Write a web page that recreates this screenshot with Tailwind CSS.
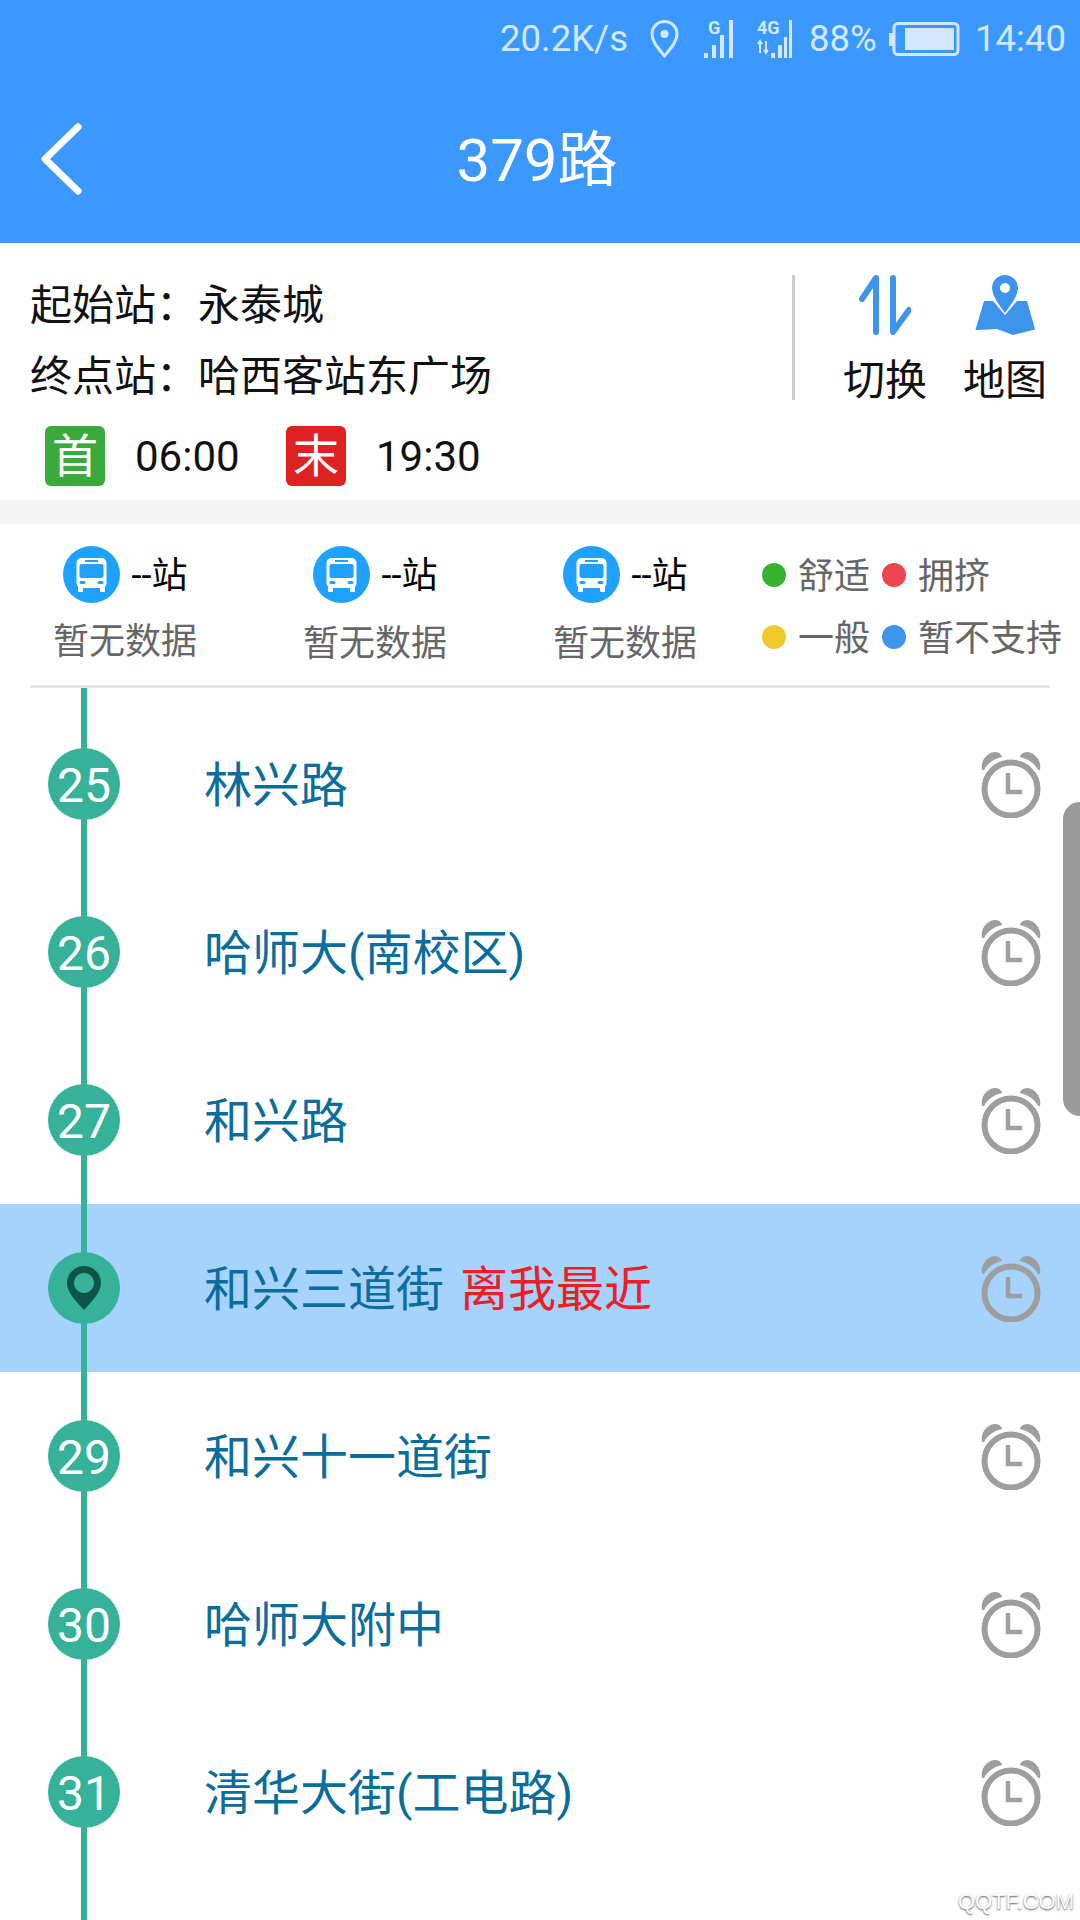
<!DOCTYPE html>
<html lang="en">
<head>
  <meta charset="UTF-8" />
  <meta name="viewport" content="width=device-width, initial-scale=1.0" />
  <title>379路</title>
  <script src="https://cdn.jsdelivr.net/npm/@tailwindcss/browser@4"></script>
</head>
<body class="bg-white">
  <svg class="hidden">
    <symbol id="alarm" viewBox="0 0 60 67">
      <circle cx="30" cy="38" r="26.5" fill="none" stroke="#9e9e9e" stroke-width="6" />
      <path d="M27 22V41H41" fill="none" stroke="#9e9e9e" stroke-width="4.5" />
      <path d="M1 19C-1 8 8 1 14 1C18 1 21 4 21 6C12 8 6 13 3 19Z" fill="#9e9e9e" />
      <path d="M59 19C61 8 52 1 46 1C42 1 39 4 39 6C48 8 54 13 57 19Z" fill="#9e9e9e" />
    </symbol>
    <symbol id="bus" viewBox="0 0 57 57">
      <circle cx="28.5" cy="28.5" r="28.5" fill="#1ea1ff" />
      <rect x="13.5" y="12" width="30" height="30" rx="5" fill="#fff" />
      <rect x="15" y="40" width="5" height="6" rx="1" fill="#fff" />
      <rect x="37" y="40" width="5" height="6" rx="1" fill="#fff" />
      <rect x="22" y="14" width="13" height="2" fill="#1ea1ff" />
      <rect x="16.5" y="18" width="24" height="14" rx="2" fill="#1ea1ff" />
      <rect x="16.5" y="35" width="6" height="3" rx="1.5" fill="#1ea1ff" />
      <rect x="34.5" y="35" width="6" height="3" rx="1.5" fill="#1ea1ff" />
    </symbol>
  </svg>

  <div class="relative w-[1080px] h-[1920px] overflow-hidden bg-white font-['Roboto','Noto_Sans_CJK_SC',sans-serif]">
    <!-- header -->
    <header class="h-[243px] bg-[#3a98fe] text-white">
      <div class="flex items-center h-[78px] pl-[500px] text-[36.5px] text-[#d3e8ff]">
        <span class="w-[128px] whitespace-nowrap">20.2K/s</span>
        <svg class="ml-[22px] w-[29px] h-[38px]" viewBox="0 0 29 38">
          <path d="M14.5 36C9 29 2 22 2 14a12.500 12.500 0 0 1 25 0C27 22 20 29 14.500 36Z" fill="none" stroke="#d3e8ff" stroke-width="3" />
          <circle cx="14.500" cy="14" r="4" fill="#d3e8ff" />
        </svg>
        <svg class="ml-[25px] w-[29px] h-[38px] overflow-visible" viewBox="0 0 29 38">
          <text x="4" y="14" font-size="18" font-weight="700" font-family="Roboto" fill="#d3e8ff">G</text>
          <rect x="0" y="33" width="4" height="5" fill="#d3e8ff" />
          <rect x="8" y="25" width="4" height="13" fill="#d3e8ff" />
          <rect x="16" y="15" width="4" height="23" fill="#d3e8ff" />
          <rect x="25" y="0" width="4" height="38" fill="#d3e8ff" />
        </svg>
        <svg class="ml-[24px] w-[35px] h-[38px] overflow-visible" viewBox="0 0 35 38">
          <text x="0" y="14" font-size="18" font-weight="700" font-family="Roboto" fill="#d3e8ff">4G</text>
          <path d="M3 21V33M1 24L3 21L5 24M9 21V33M7 30L9 33L11 30" fill="none" stroke="#d3e8ff" stroke-width="2" />
          <rect x="14" y="33" width="4" height="5" fill="#d3e8ff" />
          <rect x="21" y="25" width="4" height="13" fill="#d3e8ff" />
          <rect x="27" y="17" width="3" height="21" fill="#d3e8ff" />
          <rect x="32" y="0" width="3" height="38" fill="#d3e8ff" />
        </svg>
        <span class="ml-[17px] w-[64px]">88%</span>
        <svg class="ml-[16px] w-[71px] h-[34px]" viewBox="0 0 71 34">
          <rect x="0" y="11" width="4" height="13" fill="#d3e8ff" />
          <rect x="5" y="1.500" width="64" height="31" rx="4" fill="none" stroke="#d3e8ff" stroke-width="3" />
          <rect x="16" y="6" width="49" height="22" fill="#d3e8ff" />
        </svg>
        <span class="ml-[15px]">14:40</span>
      </div>
      <div class="relative flex items-center justify-center h-[162px] pr-[6px]">
        <svg class="absolute left-[39px] top-[42px] w-[46px] h-[78px]" viewBox="0 0 46 78">
          <path d="M39 7L6 39L39 71" fill="none" stroke="#fff" stroke-width="7" stroke-linecap="round" stroke-linejoin="round" />
        </svg>
        <h1 class="pt-[4px] text-[60px] font-normal">379路</h1>
      </div>
    </header>

    <!-- line info -->
    <section class="flex h-[257px] text-[42px] text-[#111]">
      <div class="w-[792px] pl-[30px] pt-[27px]">
        <div class="h-[71px] leading-[71px]">起始站：永泰城</div>
        <div class="h-[71px] leading-[71px]">终点站：哈西客站东广场</div>
        <div class="flex items-center mt-[11px] pl-[15px]">
          <span class="flex items-center justify-center w-[60px] h-[60px] rounded-[6px] bg-[#3aab3a] text-white text-[46px] leading-none">首</span>
          <span class="w-[151px] ml-[30px] pt-[2px]">06:00</span>
          <span class="flex items-center justify-center w-[60px] h-[60px] rounded-[6px] bg-[#de2222] text-white text-[46px] leading-none">末</span>
          <span class="ml-[30px] pt-[2px]">19:30</span>
        </div>
      </div>
      <div class="w-[3px] h-[125px] mt-[32px] bg-[#cccccc]"></div>
      <div class="ml-[30px] pt-[32px] w-[120px] flex flex-col items-center">
        <svg class="w-[52px] h-[60px]" viewBox="0 0 52 60">
          <path d="M17 57V3L3 24M34 3V57L50 35" fill="none" stroke="#3e94ec" stroke-width="6" stroke-linecap="round" stroke-linejoin="round" />
        </svg>
        <span class="mt-[18px] leading-[56px]">切换</span>
      </div>
      <div class="pt-[32px] w-[120px] flex flex-col items-center">
        <svg class="w-[60px] h-[60px]" viewBox="0 0 60 60">
          <path fill-rule="evenodd" d="M30 0a13 13 0 0 1 13 13C43 21 35 31 30 38C25 31 17 21 17 13A13 13 0 0 1 30 0ZM30 8a5 5 0 1 0 .01 0Z" fill="#3e94ec" />
          <path d="M9 26H18L30 40L42 26H52L60 54Q60 55 58 55L38 60L22 54L2 55Q0 55 1 53Z" fill="#3e94ec" />
        </svg>
        <span class="mt-[18px] leading-[56px]">地图</span>
      </div>
    </section>
    <div class="h-[24px] bg-[#f5f5f5]"></div>

    <!-- crowding -->
    <section class="flex h-[161px] text-[36px]">
      <div class="w-[250px] pt-[22px] flex flex-col items-center">
        <div class="flex items-center gap-[12px] text-black">
          <svg class="w-[57px] h-[57px]"><use href="#bus" /></svg><span class="pt-[2px]">--站</span>
        </div>
        <div class="mt-[8px] leading-[62px] text-[#666666]">暂无数据</div>
      </div>
      <div class="w-[250px] pt-[22px] flex flex-col items-center">
        <div class="flex items-center gap-[12px] text-black">
          <svg class="w-[57px] h-[57px]"><use href="#bus" /></svg><span class="pt-[2px]">--站</span>
        </div>
        <div class="mt-[10px] leading-[62px] text-[#666666]">暂无数据</div>
      </div>
      <div class="w-[250px] pt-[22px] flex flex-col items-center">
        <div class="flex items-center gap-[12px] text-black">
          <svg class="w-[57px] h-[57px]"><use href="#bus" /></svg><span class="pt-[2px]">--站</span>
        </div>
        <div class="mt-[10px] leading-[62px] text-[#666666]">暂无数据</div>
      </div>
      <div class="ml-[12px] pt-[20px] text-[#666666] leading-[62px]">
        <div class="flex items-center h-[62px]">
          <span class="w-[24px] h-[24px] rounded-full bg-[#35b32f]"></span>
          <span class="ml-[12px] w-[84px] pt-[3px]">舒适</span>
          <span class="w-[24px] h-[24px] rounded-full bg-[#ee4551]"></span>
          <span class="ml-[12px] pt-[3px]">拥挤</span>
        </div>
        <div class="flex items-center h-[62px]">
          <span class="w-[24px] h-[24px] rounded-full bg-[#f0c92a]"></span>
          <span class="ml-[12px] w-[84px] pt-[3px]">一般</span>
          <span class="w-[24px] h-[24px] rounded-full bg-[#3f95ee]"></span>
          <span class="ml-[12px] pt-[3px] whitespace-nowrap">暂不支持</span>
        </div>
      </div>
    </section>
    <div class="ml-[30px] w-[1020px] h-[3px] bg-[#e5e5e5]"></div>

    <!-- stops -->
    <main class="relative h-[1232px] pt-[12px] text-[48px] text-[#0b6d9c]">
      <div class="absolute left-[81px] top-0 bottom-0 w-[6px] bg-[#36b29a] z-10"></div>
      <div class="flex items-center h-[168px]">
        <span class="relative z-20 flex items-center justify-center ml-[48px] w-[72px] h-[72px] pt-[3px] rounded-full bg-[#36b29a] text-white text-[48px]">25</span>
        <span class="ml-[84px] flex-1 pt-[4px]">林兴路</span>
        <svg class="mr-[39px] w-[60px] h-[67px]"><use href="#alarm" /></svg>
      </div>
      <div class="flex items-center h-[168px]">
        <span class="relative z-20 flex items-center justify-center ml-[48px] w-[72px] h-[72px] pt-[3px] rounded-full bg-[#36b29a] text-white text-[48px]">26</span>
        <span class="ml-[84px] flex-1 pt-[4px]">哈师大(南校区)</span>
        <svg class="mr-[39px] w-[60px] h-[67px]"><use href="#alarm" /></svg>
      </div>
      <div class="flex items-center h-[168px]">
        <span class="relative z-20 flex items-center justify-center ml-[48px] w-[72px] h-[72px] pt-[3px] rounded-full bg-[#36b29a] text-white text-[48px]">27</span>
        <span class="ml-[84px] flex-1 pt-[4px]">和兴路</span>
        <svg class="mr-[39px] w-[60px] h-[67px]"><use href="#alarm" /></svg>
      </div>
      <div class="flex items-center h-[168px] bg-[#a6d2fe]">
        <span class="relative z-20 flex items-center justify-center ml-[48px] w-[72px] h-[72px] rounded-full bg-[#36b29a]">
          <svg class="w-[34px] h-[44px]" viewBox="0 0 34 44">
            <path fill-rule="evenodd" d="M17 0A17 17 0 0 1 34 17C34 27 24 36 17 44C10 36 0 27 0 17A17 17 0 0 1 17 0ZM17 7a10 10 0 1 0 .01 0Z" fill="#0c5446" />
          </svg>
        </span>
        <span class="ml-[84px] flex-1 pt-[4px]">和兴三道街<span class="ml-[16px] text-[#ee1c25]">离我最近</span></span>
        <svg class="mr-[39px] w-[60px] h-[67px]"><use href="#alarm" /></svg>
      </div>
      <div class="flex items-center h-[168px]">
        <span class="relative z-20 flex items-center justify-center ml-[48px] w-[72px] h-[72px] pt-[3px] rounded-full bg-[#36b29a] text-white text-[48px]">29</span>
        <span class="ml-[84px] flex-1 pt-[4px]">和兴十一道街</span>
        <svg class="mr-[39px] w-[60px] h-[67px]"><use href="#alarm" /></svg>
      </div>
      <div class="flex items-center h-[168px]">
        <span class="relative z-20 flex items-center justify-center ml-[48px] w-[72px] h-[72px] pt-[3px] rounded-full bg-[#36b29a] text-white text-[48px]">30</span>
        <span class="ml-[84px] flex-1 pt-[4px]">哈师大附中</span>
        <svg class="mr-[39px] w-[60px] h-[67px]"><use href="#alarm" /></svg>
      </div>
      <div class="flex items-center h-[168px]">
        <span class="relative z-20 flex items-center justify-center ml-[48px] w-[72px] h-[72px] pt-[3px] rounded-full bg-[#36b29a] text-white text-[48px]">31</span>
        <span class="ml-[84px] flex-1 pt-[4px]">清华大街(工电路)</span>
        <svg class="mr-[39px] w-[60px] h-[67px]"><use href="#alarm" /></svg>
      </div>
    </main>

    <!-- overlays -->
    <div class="absolute right-0 top-[802px] w-[17px] h-[314px] rounded-l-[17px] bg-[#9a9a9a]"></div>
    <div class="absolute z-30 right-[6px] bottom-[2px] text-[22px] text-white font-['Liberation_Sans',sans-serif] [text-shadow:0_1px_2px_#555]">QQTF.COM</div>
  </div>
</body>
</html>
